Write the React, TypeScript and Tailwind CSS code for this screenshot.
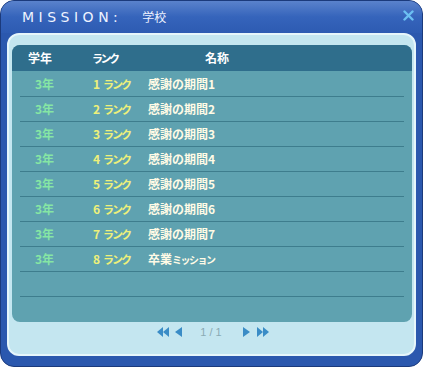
const rows = [
  { year: '3年', rank: '1', name: '感謝の期間1' },
  { year: '3年', rank: '2', name: '感謝の期間2' },
  { year: '3年', rank: '3', name: '感謝の期間3' },
  { year: '3年', rank: '4', name: '感謝の期間4' },
  { year: '3年', rank: '5', name: '感謝の期間5' },
  { year: '3年', rank: '6', name: '感謝の期間6' },
  { year: '3年', rank: '7', name: '感謝の期間7' },
  { year: '3年', rank: '8', name: '卒業', small: 'ミッション' },
]

const jp = { fontFamily: '"Noto Sans CJK JP", "Liberation Sans", sans-serif' }

function Tri({ dir }: { dir: 'l' | 'r' }) {
  return (
    <svg width="7" height="10" viewBox="0 0 7 10">
      <polygon points={dir === 'l' ? '7,0 0,5 7,10' : '0,0 7,5 0,10'} fill="#3a8cc6" />
    </svg>
  )
}

function DoubleTri({ dir }: { dir: 'l' | 'r' }) {
  return (
    <svg width="13" height="10" viewBox="0 0 13 10">
      {dir === 'l' ? (
        <>
          <polygon points="6,0 0,5 6,10" fill="#3a8cc6" />
          <polygon points="12,0 6,5 12,10" fill="#3a8cc6" />
        </>
      ) : (
        <>
          <polygon points="1,0 7,5 1,10" fill="#3a8cc6" />
          <polygon points="7,0 13,5 7,10" fill="#3a8cc6" />
        </>
      )}
    </svg>
  )
}

export default function App() {
  return (
    <div className="w-[425px] h-[368px] bg-white">
      <div className="relative w-[423px] h-[367px] rounded-[14px] border border-[#1b3a7c] bg-[#2b58ae] flex flex-col pl-[6px] pr-[6px] pb-[10px] overflow-hidden">
        {/* title bar */}
        <div className="h-[32px] shrink-0 -mx-[6px] px-[21px] flex items-center bg-gradient-to-b from-[#5a82cc] via-[#3564bb] to-[#2d5bb2]">
          <span className="text-[14px] tracking-[4.5px] text-[#eef3ff]" style={{ fontFamily: '"DejaVu Sans", sans-serif' }}>
            MISSION:
          </span>
          <span className="ml-[20px] text-[12px] text-[#eef3ff]" style={jp}>学校</span>
          <svg className="absolute right-[8px] top-[9px]" width="11" height="11" viewBox="0 0 11 11">
            <path d="M1.5 1.5 L9.5 9.5 M9.5 1.5 L1.5 9.5" stroke="#6cc0f2" strokeWidth="2.4" strokeLinecap="round" />
          </svg>
        </div>

        {/* light panel */}
        <div className="flex-1 flex flex-col rounded-[12px] border-2 border-[#e6f6fb] bg-[#c4e6f0] pl-[3px] pr-[2px] pt-[10px]">
          <div className="h-[277px] shrink-0 rounded-[8px] bg-[#5fa2b0] overflow-hidden" style={jp}>
            <div className="h-[26px] flex items-center bg-[#2f6e8c] text-[12px] font-bold text-white">
              <span className="w-[80px] pl-[16px]">学年</span>
              <span className="w-[113px] text-[11px] tracking-[-2.5px]">ランク</span>
              <span>名称</span>
            </div>
            <div className="px-[8px] pt-[1px]">
              {rows.map((r) => (
                <div key={r.rank} className="h-[25px] flex items-center border-b border-[#3e7d8d] text-[12px] font-bold">
                  <span className="w-[58px] pl-[15px] text-[#86e6a4]">{r.year}</span>
                  <span className="w-[70px] pl-[15px] text-[#eef07a]">
                    {r.rank}
                    <span className="ml-[3px] text-[11px] tracking-[-2px]">ランク</span>
                  </span>
                  <span className="text-[#fffbe6]">
                    {r.name}
                    {r.small && <span className="text-[10px] tracking-[-1.5px]">{r.small}</span>}
                  </span>
                </div>
              ))}
              <div className="h-[25px] border-b border-[#3e7d8d]" />
            </div>
          </div>

          {/* pager */}
          <div className="flex items-start justify-center pt-[5px] pl-[2px]">
            <DoubleTri dir="l" />
            <span className="ml-[5px]"><Tri dir="l" /></span>
            <span className="ml-[18px] -mt-[3px] text-[11px] text-[#8aaab4]" style={{ fontFamily: '"Liberation Sans", sans-serif' }}>
              1 / 1
            </span>
            <span className="ml-[21px]"><Tri dir="r" /></span>
            <span className="ml-[6px]"><DoubleTri dir="r" /></span>
          </div>
        </div>
      </div>
    </div>
  )
}
